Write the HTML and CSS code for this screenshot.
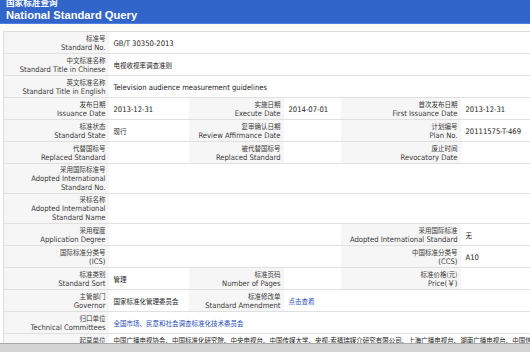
FILE: index.html
```html
<!DOCTYPE html>
<html>
<head>
  <meta charset="utf-8">
  <title>国家标准查询</title>
  <link rel="stylesheet" href="styles.css">
</head>
<body>
  <div class="banner">
    <div class="banner-cn">国家标准查询</div>
    <div class="banner-en">National Standard Query</div>
  </div>
  <div class="gap"></div>

  <table class="detail">
    <colgroup>
      <col class="c-label1">
      <col class="c-value1">
      <col class="c-label2">
      <col class="c-value2">
      <col class="c-label3">
      <col class="c-value3">
    </colgroup>
    <tr>
      <td class="label"><span class="cn">标准号</span><br>Standard No.</td>
      <td class="value" colspan="5">GB/T 30350-2013</td>
    </tr>
    <tr>
      <td class="label"><span class="cn">中文标准名称</span><br>Standard Title in Chinese</td>
      <td class="value" colspan="5"><span class="cn">电视收视率调查准则</span></td>
    </tr>
    <tr>
      <td class="label"><span class="cn">英文标准名称</span><br>Standard Title in English</td>
      <td class="value" colspan="5">Television audience measurement guidelines</td>
    </tr>
    <tr>
      <td class="label"><span class="cn">发布日期</span><br>Issuance Date</td>
      <td class="value">2013-12-31</td>
      <td class="label"><span class="cn">实施日期</span><br>Execute Date</td>
      <td class="value">2014-07-01</td>
      <td class="label"><span class="cn">首次发布日期</span><br>First Issuance Date</td>
      <td class="value">2013-12-31</td>
    </tr>
    <tr>
      <td class="label"><span class="cn">标准状态</span><br>Standard State</td>
      <td class="value"><span class="cn">现行</span></td>
      <td class="label"><span class="cn">复审确认日期</span><br>Review Affirmance Date</td>
      <td class="value"></td>
      <td class="label"><span class="cn">计划编号</span><br>Plan No.</td>
      <td class="value">20111575-T-469</td>
    </tr>
    <tr>
      <td class="label"><span class="cn">代替国标号</span><br>Replaced Standard</td>
      <td class="value"></td>
      <td class="label"><span class="cn">被代替国标号</span><br>Replaced Standard</td>
      <td class="value"></td>
      <td class="label"><span class="cn">废止时间</span><br>Revocatory Date</td>
      <td class="value"></td>
    </tr>
    <tr class="tall">
      <td class="label"><span class="cn">采用国际标准号</span><br>Adopted International<br>Standard No.</td>
      <td class="value" colspan="5"></td>
    </tr>
    <tr class="tall">
      <td class="label"><span class="cn">采标名称</span><br>Adopted International<br>Standard Name</td>
      <td class="value" colspan="5"></td>
    </tr>
    <tr>
      <td class="label"><span class="cn">采用程度</span><br>Application Degree</td>
      <td class="value" colspan="3"></td>
      <td class="label"><span class="cn">采用国际标准</span><br>Adopted International Standard</td>
      <td class="value"><span class="cn">无</span></td>
    </tr>
    <tr>
      <td class="label"><span class="cn">国际标准分类号</span><br>(ICS)</td>
      <td class="value" colspan="3"></td>
      <td class="label"><span class="cn">中国标准分类号</span><br>(CCS)</td>
      <td class="value">A10</td>
    </tr>
    <tr>
      <td class="label"><span class="cn">标准类别</span><br>Standard Sort</td>
      <td class="value"><span class="cn">管理</span></td>
      <td class="label"><span class="cn">标准页码</span><br>Number of Pages</td>
      <td class="value"></td>
      <td class="label"><span class="cn">标准价格(元)</span><br>Price(￥)</td>
      <td class="value"></td>
    </tr>
    <tr>
      <td class="label"><span class="cn">主管部门</span><br>Governor</td>
      <td class="value"><span class="cn">国家标准化管理委员会</span></td>
      <td class="label"><span class="cn">标准修改单</span><br>Standard Amendment</td>
      <td class="value" colspan="3"><a class="cn" href="#">点击查看</a></td>
    </tr>
    <tr>
      <td class="label"><span class="cn">归口单位</span><br>Technical Committees</td>
      <td class="value" colspan="5"><a class="cn" href="#">全国市场、民意和社会调查标准化技术委员会</a></td>
    </tr>
    <tr>
      <td class="label"><span class="cn">起草单位</span><br>Drafting Committee</td>
      <td class="value" colspan="5"><span class="cn">中国广播电视协会、中国标准化研究院、中央电视台、中国传媒大学、央视-索福瑞媒介研究有限公司、上海广播电视台、湖南广播电视台、中国信息协会市场研究业分会、中国广告协会</span></td>
    </tr>
  </table>

  <div class="scrollbar"></div>
</body>
</html>
```

FILE: styles.css
```css
html, body {
  margin: 0;
  padding: 0;
  overflow: hidden;
}

body {
  font-family: "DejaVu Sans Condensed", "DejaVu Sans", "Noto Sans CJK SC", sans-serif;
  font-size: 7.6px;
  color: #333;
  background: #fff;
}

.cn {
  font-family: "Noto Sans CJK SC", sans-serif;
  font-size: 6.5px;
}

/* Blue title band */
.banner {
  height: 26px;
  background: #3265c9;
  border-bottom: 1px solid #4d7fe6;
  color: #fff;
  padding-left: 6px;
  box-sizing: border-box;
}

.banner-cn {
  font-family: "Noto Sans CJK SC", sans-serif;
  font-weight: bold;
  font-size: 8.6px;
  line-height: 9px;
  margin-top: -2px;
}

.banner-en {
  font-family: "Liberation Sans", Arial, sans-serif;
  font-weight: bold;
  font-size: 11.2px;
  line-height: 14px;
  margin-top: 1px;
}

.gap {
  height: 7px;
  background: #fdfdf8;
}

/* Detail table */
.detail {
  margin-left: 3px;
  width: 532px;
  table-layout: fixed;
  border-collapse: collapse;
  border-top: 1px solid #dedede;
  border-left: 1px solid #dedede;
}

.c-label1 { width: 105px; }
.c-value1 { width: 80px; }
.c-label2 { width: 95px; }
.c-value2 { width: 57px; }
.c-label3 { width: 120px; }

.detail td {
  border-bottom: 1px solid #e0e0e0;
  padding: 2px 3px 1px;
  line-height: 9px;
  vertical-align: middle;
}

.detail .tall td {
  padding-top: 1px;
  padding-bottom: 1px;
}

.detail .label {
  background: #f6f6f6;
  text-align: right;
  color: #3a3a3a;
}

.detail .value {
  background: #fff;
  padding-left: 5px;
  color: #222;
}

.detail a {
  color: #2549b8;
  text-decoration: none;
}

/* window scrollbar strip at the bottom */
.scrollbar {
  position: fixed;
  left: 0;
  right: 0;
  bottom: 0;
  height: 8px;
  background: #d4d4d4;
  border-top: 1px solid #a8a8a8;
}
```
